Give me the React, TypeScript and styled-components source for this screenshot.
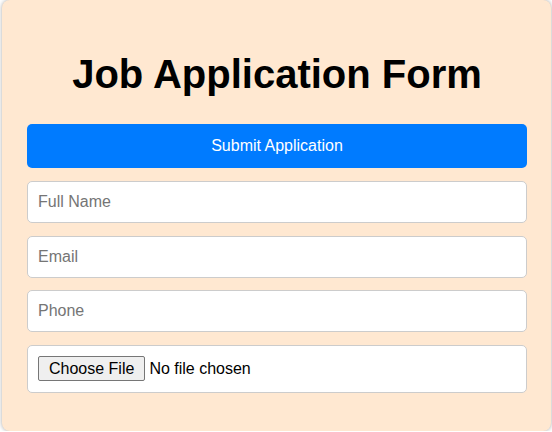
import styled, { createGlobalStyle } from "styled-components";

const GlobalStyle = createGlobalStyle`
  html, body {
    margin: 0;
    padding: 0;
    background: #ffffff;
  }
`;

const Card = styled.div`
  box-sizing: border-box;
  width: 549px;
  height: 431px;
  margin: 0 0 0 2px;
  padding: 51px 24px 25px 25px;
  background: #ffe8d1;
  border-radius: 8px;
  box-shadow: 0 0 4px rgba(0, 0, 0, 0.35);
  font-family: "Liberation Sans", Arial, sans-serif;
`;

const Title = styled.h1`
  margin: 0 0 27px;
  font-size: 40px;
  line-height: 46px;
  font-weight: bold;
  text-align: center;
  color: #000;
`;

const Form = styled.form`
  display: flex;
  flex-direction: column;
  gap: 12.7px;
`;

const SubmitButton = styled.button`
  height: 44px;
  margin-bottom: 0.3px;
  border: none;
  border-radius: 5px;
  background: #007bff;
  color: #fff;
  font-family: inherit;
  font-size: 16px;
  cursor: pointer;
`;

const Field = styled.input<{ $file?: boolean }>`
  box-sizing: border-box;
  width: 100%;
  height: ${(p) => (p.$file ? "48px" : "42px")};
  padding: ${(p) => (p.$file ? "10px 10px" : "0 10px")};
  border: 1px solid #cccccc;
  border-radius: 5px;
  background: #fff;
  font-family: inherit;
  font-size: 16px;
  color: #000;
  outline: none;

  &::placeholder {
    color: #757575;
  }

  &::file-selector-button {
    font-family: inherit;
    font-size: 16px;
    height: 25px;
    padding: 0 10px;
    margin-right: 4px;
    background: #efefef;
    border: 1px solid #767676;
    border-radius: 2px;
    color: #000;
  }
`;

export default function App() {
  return (
    <>
      <GlobalStyle />
      <Card>
        <Title>Job Application Form</Title>
        <Form onSubmit={(e) => e.preventDefault()}>
          <SubmitButton type="submit">Submit Application</SubmitButton>
          <Field type="text" placeholder="Full Name" />
          <Field type="email" placeholder="Email" />
          <Field type="tel" placeholder="Phone" />
          <Field $file type="file" />
        </Form>
      </Card>
    </>
  );
}
